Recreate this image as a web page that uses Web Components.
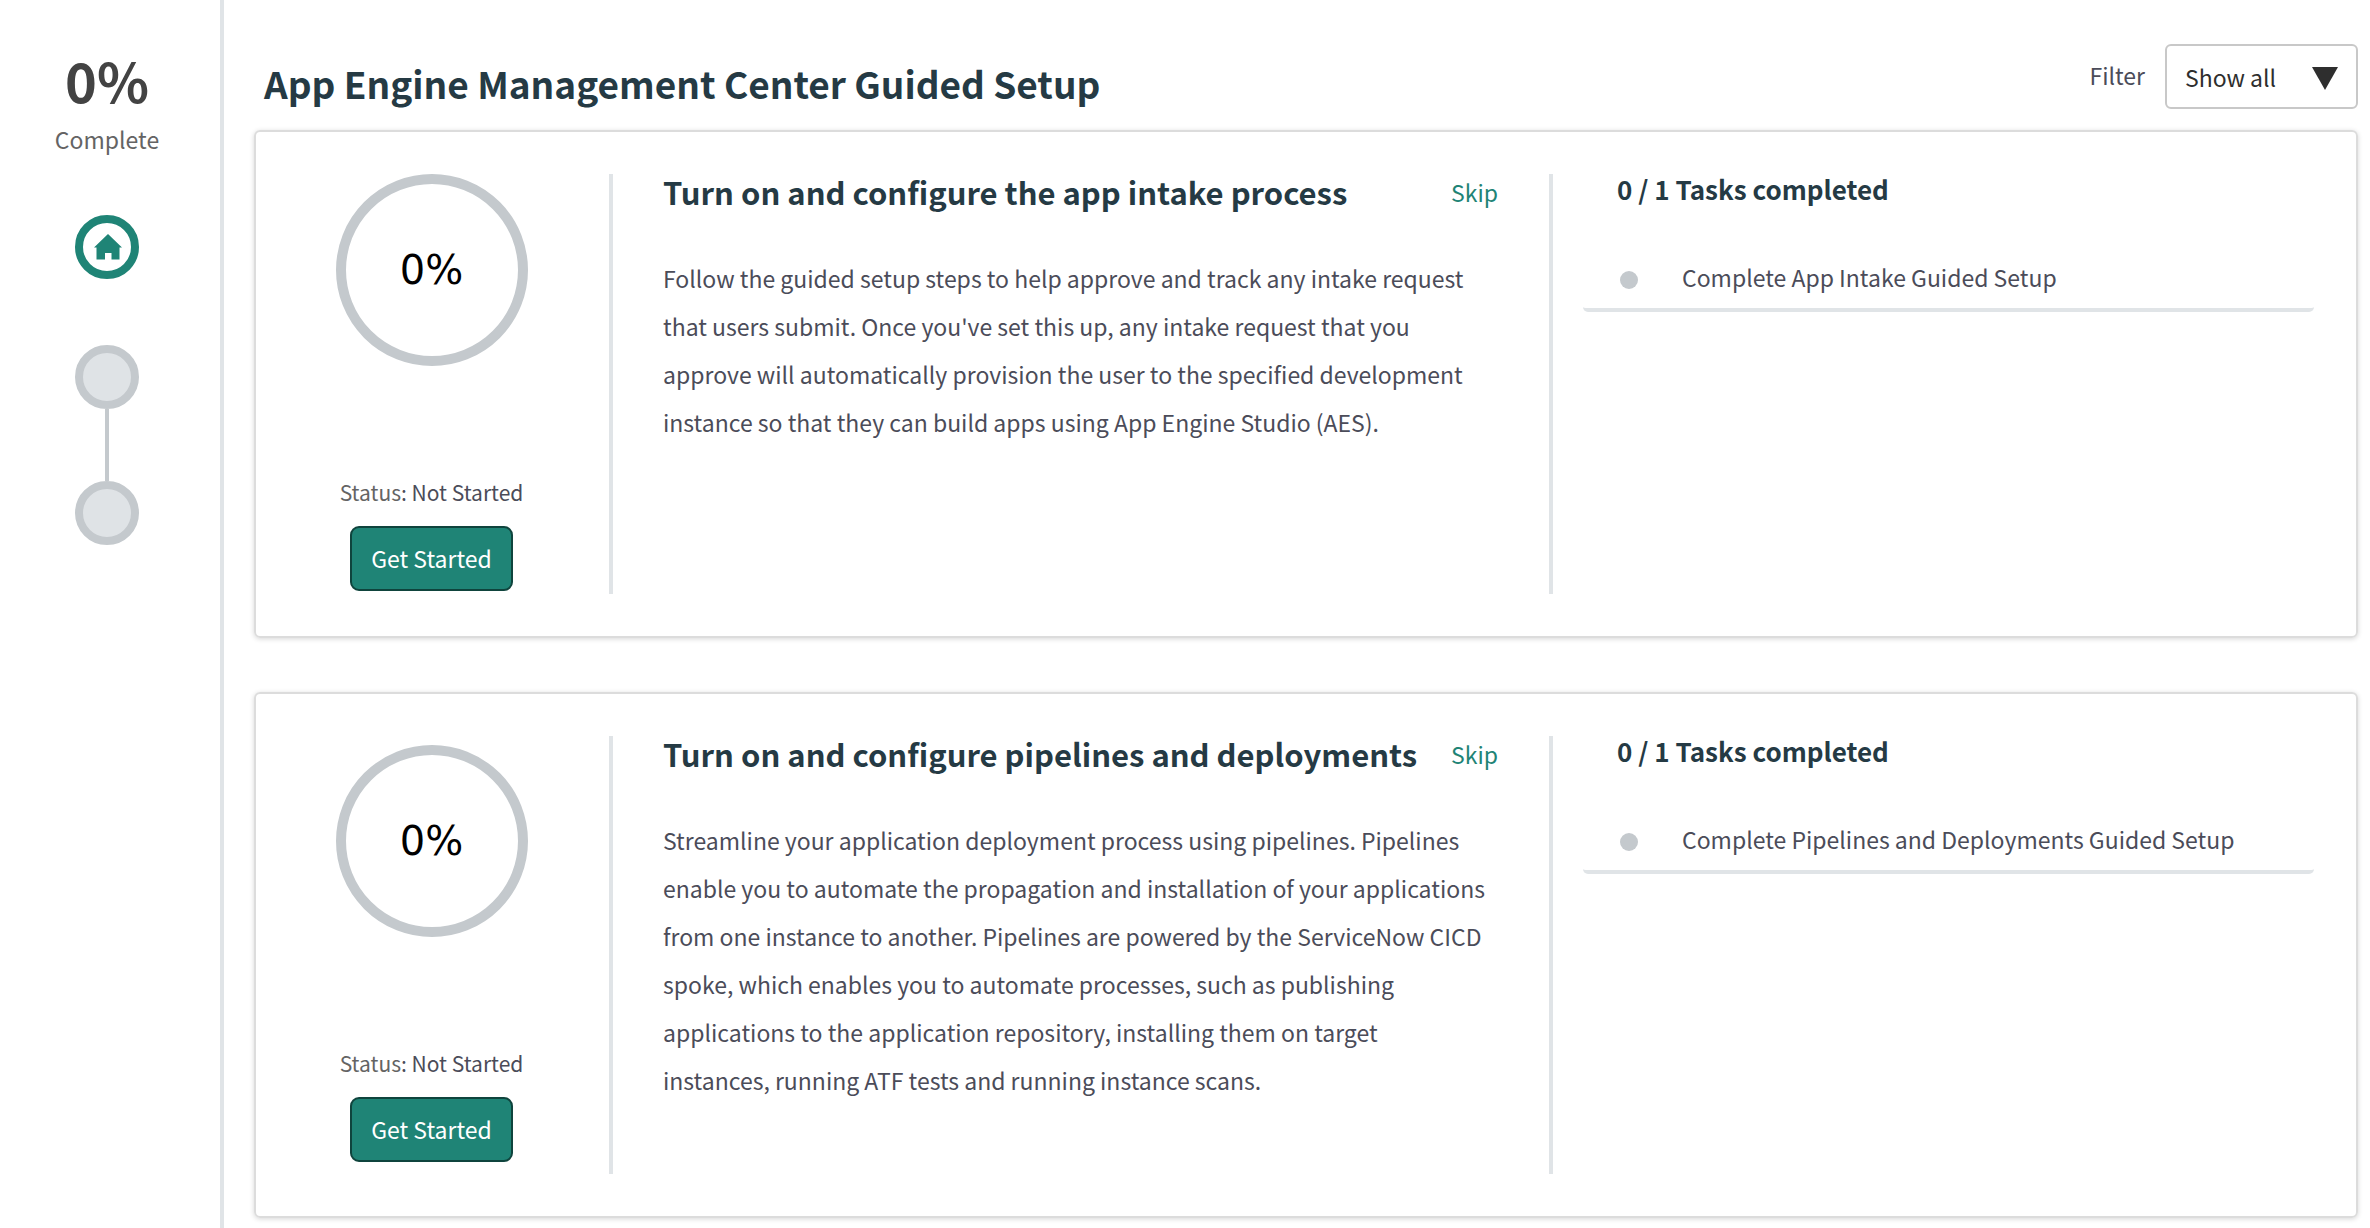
<!DOCTYPE html>
<html lang="en">
<head>
<meta charset="utf-8">
<title>App Engine Management Center Guided Setup</title>
<style>
  body {
    margin: 0;
    background: #fff;
    color: #4b4c59;
    font-family: "Noto Sans CJK SC", "Noto Sans", sans-serif;
    font-size: 23px;
    line-height: 36px;
    --heading: #253a44;
    --accent: #1f8476;
    --accent-dark: #0f443d;
    --ring: #c4c9cd;
    --rule: #e0e4e7;
    --muted: #646464;
  }
</style>
</head>
<body>
<guided-setup></guided-setup>

<script>
const define = (name, html, setup) => {
  const template = document.createElement('template');
  template.innerHTML = html;
  customElements.define(name, class extends HTMLElement {
    constructor() {
      super();
      this.attachShadow({ mode: 'open' }).append(template.content.cloneNode(true));
    }
    connectedCallback() {
      if (setup) setup(this, this.shadowRoot);
    }
  });
};

define('setup-step', `
  <style>
    :host { display: block; }
    a {
      display: flex; align-items: center; justify-content: center;
      box-sizing: border-box; width: 64px; height: 64px;
      border: 8px solid var(--ring); border-radius: 50%;
      background: #dfe3e6; color: var(--accent);
    }
    :host([current]) a { border-color: var(--accent); background: #fff; }
  </style>
  <a href="#"><slot></slot></a>
`, (host, root) => root.querySelector('a').setAttribute('aria-label', host.getAttribute('label')));

define('setup-sidebar', `
  <style>
    :host {
      display: flex; flex-direction: column; align-items: center;
      box-sizing: border-box; width: 224px; flex: none;
      padding: 48px 6px 0 0; border-right: 4px solid var(--rule);
    }
    .total { font-size: 54px; line-height: 64px; font-weight: 700; color: #434343; }
    .caption { margin-top: 9px; color: var(--muted); }
    nav { display: flex; flex-direction: column; align-items: center; margin-top: 58px; }
    .home { margin-bottom: 66px; }
    .link { width: 4px; height: 72px; background: var(--ring); }
    svg { display: block; }
  </style>
  <div class="total">0%</div>
  <div class="caption">Complete</div>
  <nav aria-label="Setup steps">
    <setup-step class="home" current label="Home">
      <svg width="30" height="26" viewBox="-2 0 30 26" fill="currentColor" aria-hidden="true">
        <path d="M14 0 28 13.500H25.500V25.500H17.500V19H11V25.500H2.500V13.500H0Z"/>
      </svg>
    </setup-step>
    <setup-step label="App intake"></setup-step>
    <div class="link"></div>
    <setup-step label="Pipelines and deployments"></setup-step>
  </nav>
`);

define('setup-filter', `
  <style>
    :host { display: flex; align-items: center; gap: 20px; }
    label { padding-bottom: 3px; }
    .box { display: grid; align-items: center; }
    select, svg { grid-area: 1 / 1; }
    select {
      appearance: none; box-sizing: border-box; width: 193px; height: 65px;
      margin: 0; padding: 0 60px 0 18px;
      border: 2px solid #c8c8c8; border-radius: 6px; background: #fff;
      font: inherit; color: #2e2e2e;
    }
    svg { justify-self: end; margin: 4px 20px 0 0; pointer-events: none; }
  </style>
  <label for="filter">Filter</label>
  <div class="box">
    <select id="filter"><option>Show all</option><option>Not Started</option><option>Completed</option></select>
    <svg width="26" height="23" viewBox="0 0 26 23" fill="#2e2e2e" aria-hidden="true"><path d="M0 0H26L13 23Z"/></svg>
  </div>
`);

define('progress-ring', `
  <style>
    :host {
      display: flex; align-items: center; justify-content: center;
      box-sizing: border-box; width: 192px; height: 192px;
      border: 10px solid var(--ring); border-radius: 50%;
      font-family: "DejaVu Sans", sans-serif; font-size: 40px; line-height: 60px; color: #000;
    }
  </style>
  <slot></slot>
`);

define('task-item', `
  <style>
    :host {
      display: flex; gap: 44px; padding: 0 37px 13px;
      border-bottom: 4px solid var(--rule); border-radius: 5px;
    }
    i { flex: none; width: 18px; height: 18px; margin-top: 12px; border-radius: 50%; background: var(--ring); }
  </style>
  <i></i><span><slot></slot></span>
`);

define('setup-card', `
  <style>
    :host {
      display: grid; grid-template-columns: 357fr 940fr 803fr;
      padding: 42px 0; border: 2px solid #dcdcdc; border-radius: 6px;
      box-shadow: 0 1px 5px rgba(0, 0, 0, .16);
    }
    .progress, .about { border-right: 4px solid var(--rule); }
    .progress {
      display: flex; flex-direction: column; align-items: center; justify-content: center;
      padding-right: 2px;
    }
    .status { margin-top: 110px; font-size: 21px; line-height: 32px; }
    .status span { color: var(--muted); }
    button {
      height: 65px; margin: 18px 0 3px; padding: 0 19px 2px;
      border: 2px solid var(--accent-dark); border-radius: 9px;
      background: var(--accent); color: #fff; font: inherit;
    }
    .about { padding: 0 51px 70px 50px; }
    .top { display: flex; justify-content: space-between; }
    h2, h3, p { margin: 0; }
    h2 { font-size: 31px; line-height: 36px; font-weight: 700; color: var(--heading); }
    a { color: var(--accent); text-decoration: none; }
    p { margin-top: 44px; padding-right: 10px; line-height: 48px; }
    h3 { padding-left: 64px; font-size: 26px; line-height: 30px; font-weight: 700; color: var(--heading); }
    .list { margin: 55px 42px 0 30px; }
  </style>
  <div class="progress">
    <progress-ring>0%</progress-ring>
    <div class="status"><span>Status</span>: Not Started</div>
    <button type="button">Get Started</button>
  </div>
  <div class="about">
    <div class="top"><h2><slot name="title"></slot></h2><a href="#">Skip</a></div>
    <p><slot></slot></p>
  </div>
  <div class="tasks">
    <h3>0 / 1 Tasks completed</h3>
    <div class="list"><slot name="task"></slot></div>
  </div>
`);

define('guided-setup', `
  <style>
    :host { display: flex; min-height: 100vh; }
    main { flex: 1; min-width: 0; padding: 44px 12px 10px 30px; }
    header { display: flex; align-items: flex-end; justify-content: space-between; margin-bottom: 21px; }
    h1 { margin: 0 0 0 10px; font-size: 37px; line-height: 52px; font-weight: 700; color: var(--heading); }
    .cards { display: grid; gap: 54px; }
  </style>
  <setup-sidebar></setup-sidebar>
  <main>
    <header><h1>App Engine Management Center Guided Setup</h1><setup-filter></setup-filter></header>
    <div class="cards">
      <setup-card>
        <span slot="title">Turn on and configure the app intake process</span>
        Follow the guided setup steps to help approve and track any intake request that users submit. Once you've set this up, any intake request that you approve will automatically provision the user to the specified development instance so that they can build apps using App Engine Studio (AES).
        <task-item slot="task">Complete App Intake Guided Setup</task-item>
      </setup-card>
      <setup-card>
        <span slot="title">Turn on and configure pipelines and deployments</span>
        Streamline your application deployment process using pipelines. Pipelines enable you to automate the propagation and installation of your applications from one instance to another. Pipelines are powered by the ServiceNow CICD spoke, which enables you to automate processes, such as publishing applications to the application repository, installing them on target instances, running ATF tests and running instance scans.
        <task-item slot="task">Complete Pipelines and Deployments Guided Setup</task-item>
      </setup-card>
    </div>
  </main>
`);
</script>
</body>
</html>
